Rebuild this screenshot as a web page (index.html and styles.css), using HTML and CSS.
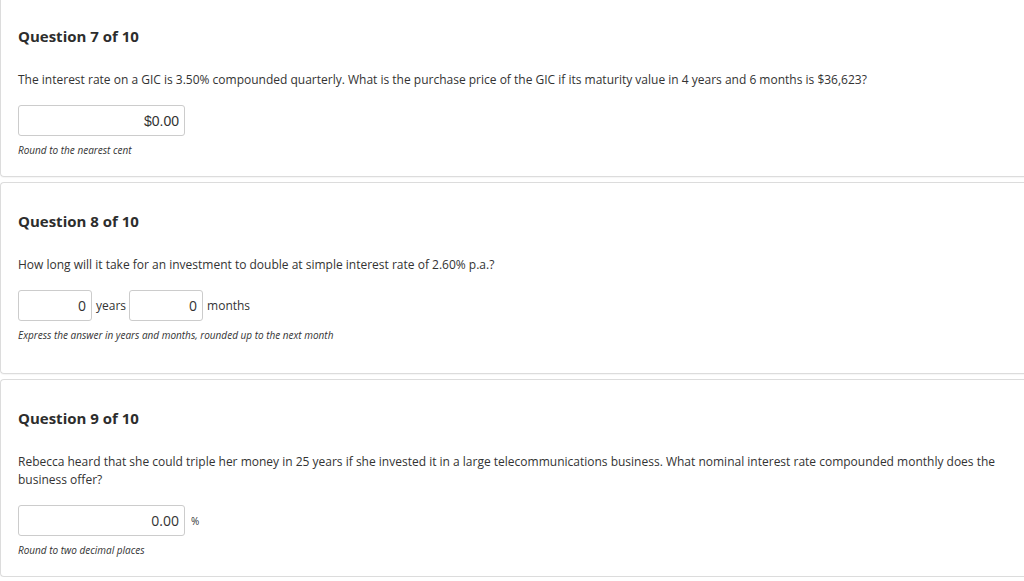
FILE: index.html
```html
<!DOCTYPE html>
<html lang="en">
<head>
<meta charset="utf-8">
<title>Questions</title>
<link rel="stylesheet" href="styles.css">
</head>
<body>
<div class="page">
  <section class="card card-first">
    <h2 class="q-title">Question 7 of 10</h2>
    <p class="q-text">The interest rate on a GIC is 3.50% compounded quarterly. What is the purchase price of the GIC if its maturity value in 4 years and 6 months is $36,623?</p>
    <div class="answer-row">
      <input class="field field-wide field-arial" type="text" value="$0.00">
    </div>
    <p class="hint">Round to the nearest cent</p>
  </section>
  <section class="card card-tall">
    <h2 class="q-title">Question 8 of 10</h2>
    <p class="q-text">How long will it take for an investment to double at simple interest rate of 2.60% p.a.?</p>
    <div class="answer-row">
      <input class="field field-short" type="text" value="0">
      <span class="unit">years</span>
      <input class="field field-short" type="text" value="0">
      <span class="unit">months</span>
    </div>
    <p class="hint">Express the answer in years and months, rounded up to the next month</p>
  </section>
  <section class="card">
    <h2 class="q-title">Question 9 of 10</h2>
    <p class="q-text">Rebecca heard that she could triple her money in 25 years if she invested it in a large telecommunications business. What nominal interest rate compounded monthly does the business offer?</p>
    <div class="answer-row">
      <input class="field field-wide" type="text" value="0.00">
      <span class="unit unit-small">%</span>
    </div>
    <p class="hint">Round to two decimal places</p>
  </section>
</div>
</body>
</html>
```
FILE: styles.css
```css
html, body {
  margin: 0;
  padding: 0;
  background: #ffffff;
}
body {
  font-family: "Open Sans", "Liberation Sans", sans-serif;
  color: #333333;
  overflow: hidden;
}
.page {
  display: flex;
  flex-direction: column;
  gap: 5px;
  margin-top: -3px;
}
.card {
  border: 1px solid #dcdcdc;
  border-right: 0;
  border-radius: 4px 0 0 4px;
  padding: 28px 20px 19px 17px;
  box-shadow: 0 1px 1px rgba(0, 0, 0, 0.04);
}
.card-tall {
  padding-bottom: 31px;
}
.q-title {
  margin: 0;
  font-size: 15px;
  line-height: 20px;
  font-weight: 700;
  color: #2d2d2d;
}
.q-text {
  margin: 25px 0 0;
  font-size: 12px;
  line-height: 18px;
  color: #333333;
  max-width: 1000px;
}
.answer-row {
  display: flex;
  align-items: center;
  margin-top: 16px;
}
.field {
  box-sizing: border-box;
  height: 31px;
  border: 1px solid #cccccc;
  border-radius: 3px;
  padding: 0 5px;
  text-align: right;
  font-family: "Open Sans", sans-serif;
  font-size: 14px;
  color: #333333;
  background: #ffffff;
}
.field-arial {
  font-family: "Liberation Sans", Arial, sans-serif;
}
.field-wide {
  width: 167px;
}
.field-short {
  width: 74px;
}
.unit {
  font-size: 12px;
  margin: 0 3px 0 4px;
}
.unit-small {
  font-size: 10px;
  margin-left: 6px;
}
.hint {
  margin: 7px 0 0;
  font-size: 10px;
  line-height: 14px;
  font-style: italic;
  color: #333333;
}
```
